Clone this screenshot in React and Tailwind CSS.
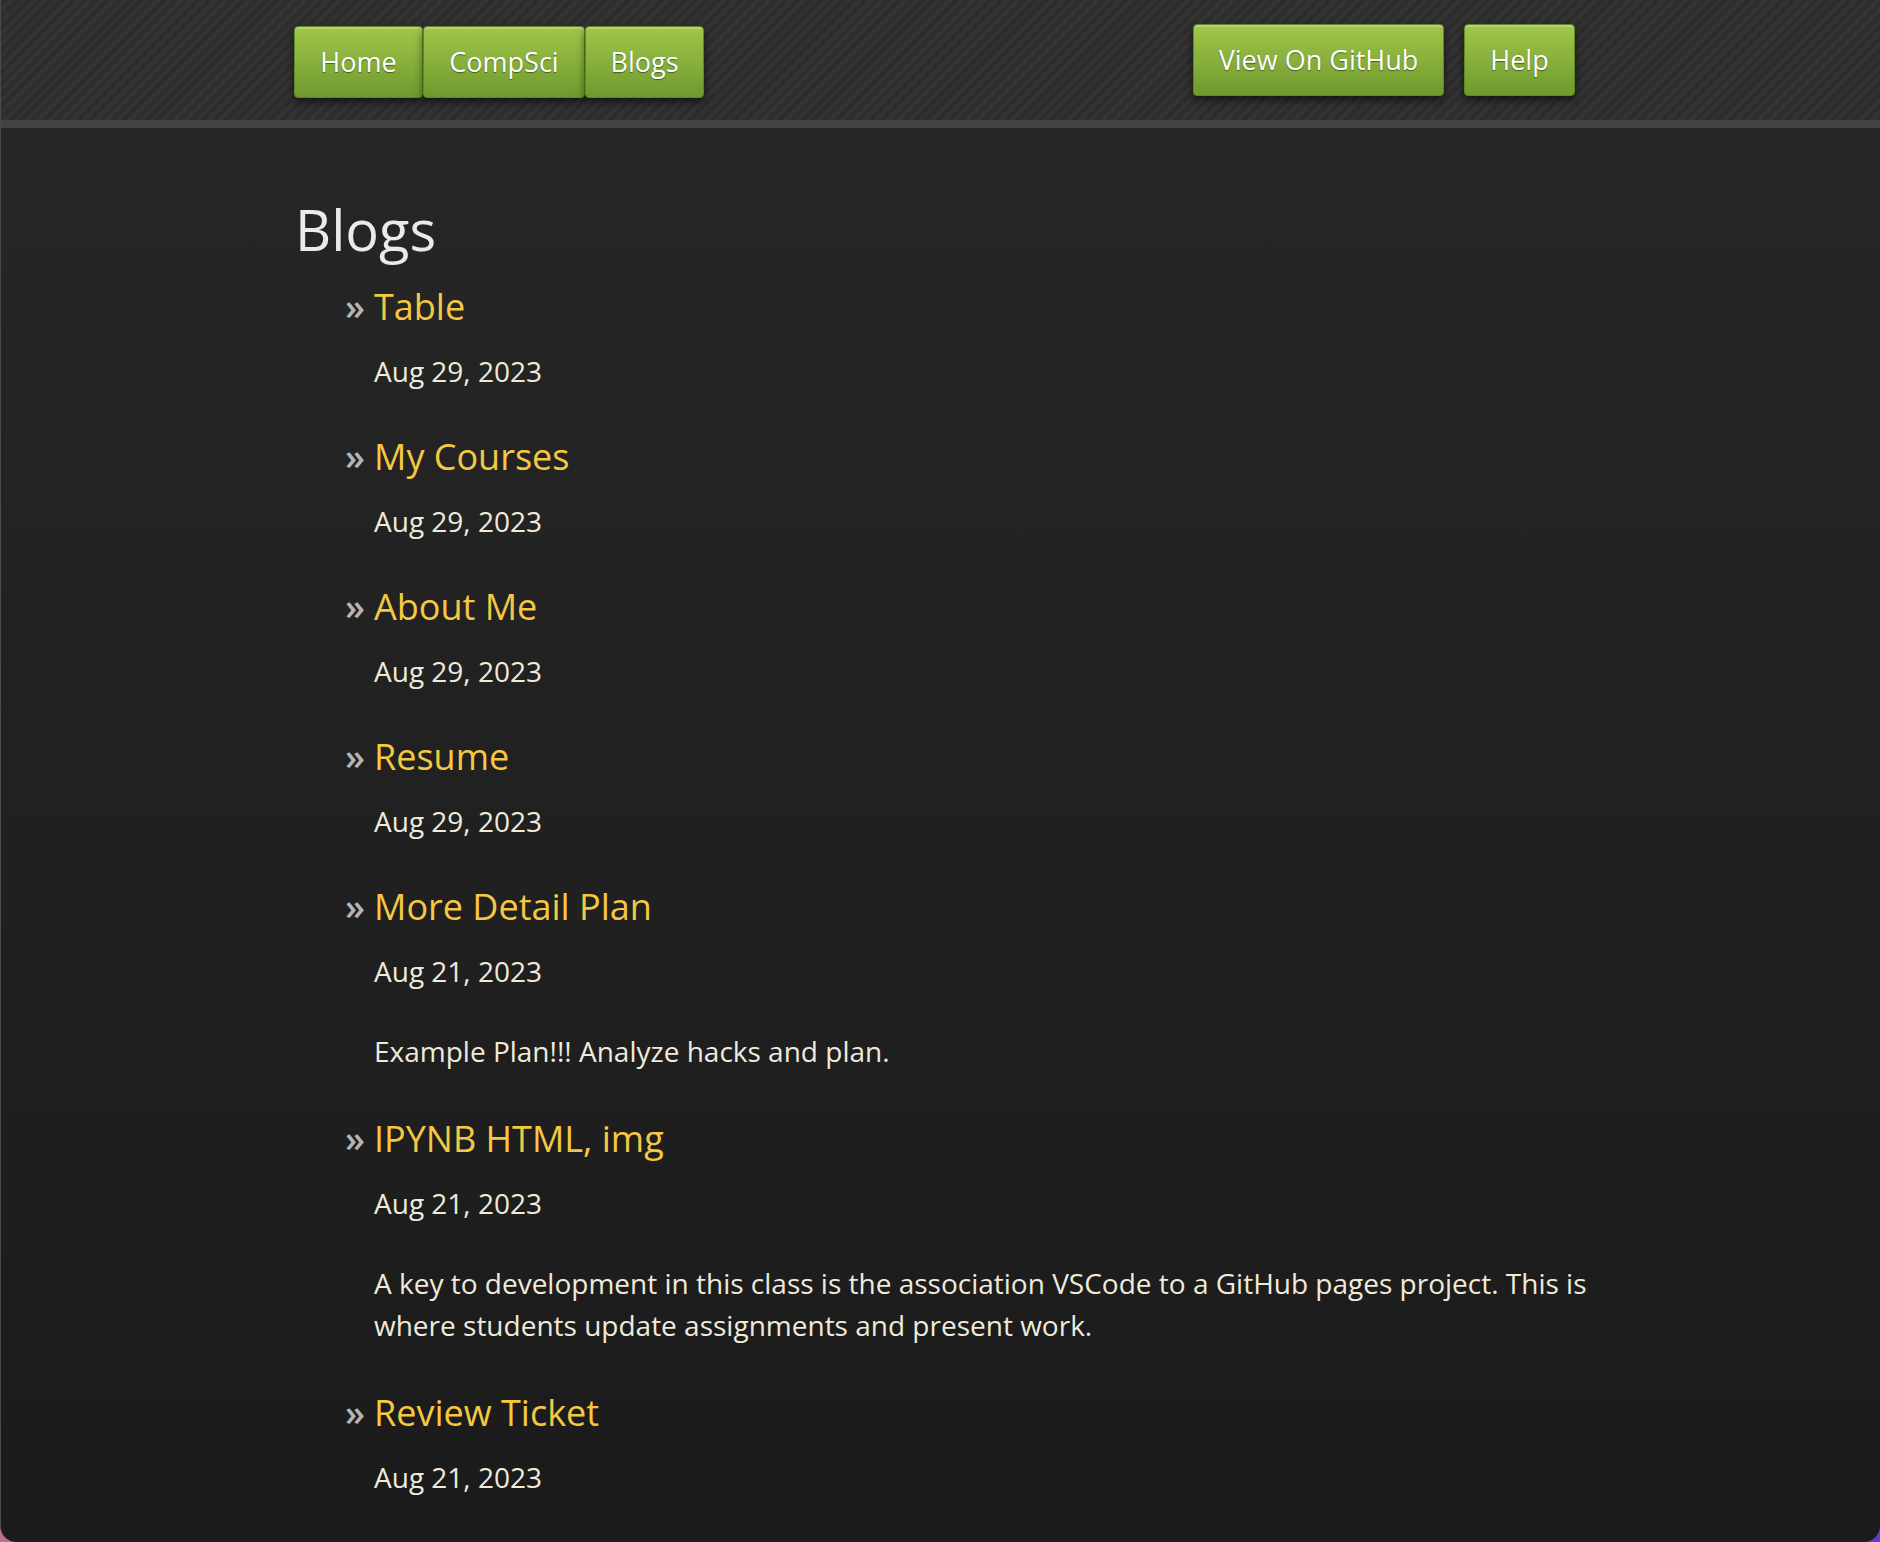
import React from 'react';

const posts = [
  { title: 'Table', date: 'Aug 29, 2023' },
  { title: 'My Courses', date: 'Aug 29, 2023' },
  { title: 'About Me', date: 'Aug 29, 2023' },
  { title: 'Resume', date: 'Aug 29, 2023' },
  { title: 'More Detail Plan', date: 'Aug 21, 2023', excerpt: 'Example Plan!!! Analyze hacks and plan.' },
  {
    title: 'IPYNB HTML, img',
    date: 'Aug 21, 2023',
    excerpt:
      'A key to development in this class is the association VSCode to a GitHub pages project. This is where students update assignments and present work.',
  },
  { title: 'Review Ticket', date: 'Aug 21, 2023' },
];

const btn =
  'flex items-center justify-center h-[72px] rounded-[4px] border border-[#5e8a22] bg-gradient-to-b from-[#a2c64b] to-[#6e9a2d] text-white text-[27px] [text-shadow:0_1px_1px_rgba(0,0,0,0.45)] shadow-[inset_0_2px_0_rgba(255,255,255,0.22),0_4px_8px_rgba(0,0,0,0.55)]';

const App = () => {
  return (
    <div className="bg-gradient-to-r from-[#c0708c] to-[#5a3fd0] font-['Open_Sans',sans-serif]">
      <div className="h-[1542px] overflow-hidden rounded-b-[16px] border-l border-[#4a4a4a] bg-gradient-to-b from-[#272727] to-[#1b1b1b]">
        {/* HEADER */}
        <header className="h-[128px] border-b-[8px] border-[#434343] bg-[repeating-linear-gradient(-45deg,#2d2d2d_0px,#2d2d2d_4px,#333333_4px,#333333_8px)]">
          <div className="ml-[293px] w-[1281px] flex justify-between">
            <nav className="flex pt-[26px]">
              <a className={`${btn} w-[129px]`}>Home</a>
              <a className={`${btn} w-[162px]`}>CompSci</a>
              <a className={`${btn} w-[119px]`}>Blogs</a>
            </nav>
            <div className="flex gap-[20px] pt-[24px]">
              <a className={`${btn} w-[251px]`}>View On GitHub</a>
              <a className={`${btn} w-[111px]`}>Help</a>
            </div>
          </div>
        </header>

        {/* POST LIST */}
        <main className="ml-[294px] w-[1310px] pt-[66px]">
          <h1 className="text-[56px] leading-[70px] text-[#eaeaea] mb-[16px]">Blogs</h1>
          <ul className="pl-[79px]">
            {posts.map((post) => (
              <li key={post.title}>
                <h2 className="pt-[3px] text-[36px] leading-[48px] text-[#f5c843] mb-[19px]">
                  <span className="inline-block -ml-[29px] w-[29px] font-semibold text-[#b5b5b5]">»</span>
                  {post.title}
                </h2>
                <p className="text-[28px] leading-[42px] text-[#efeadb] mb-[38px]">{post.date}</p>
                {post.excerpt && (
                  <p className="text-[28px] leading-[42px] text-[#efeadb] mb-[40px]">{post.excerpt}</p>
                )}
              </li>
            ))}
          </ul>
        </main>
      </div>
    </div>
  );
};

export default App;
